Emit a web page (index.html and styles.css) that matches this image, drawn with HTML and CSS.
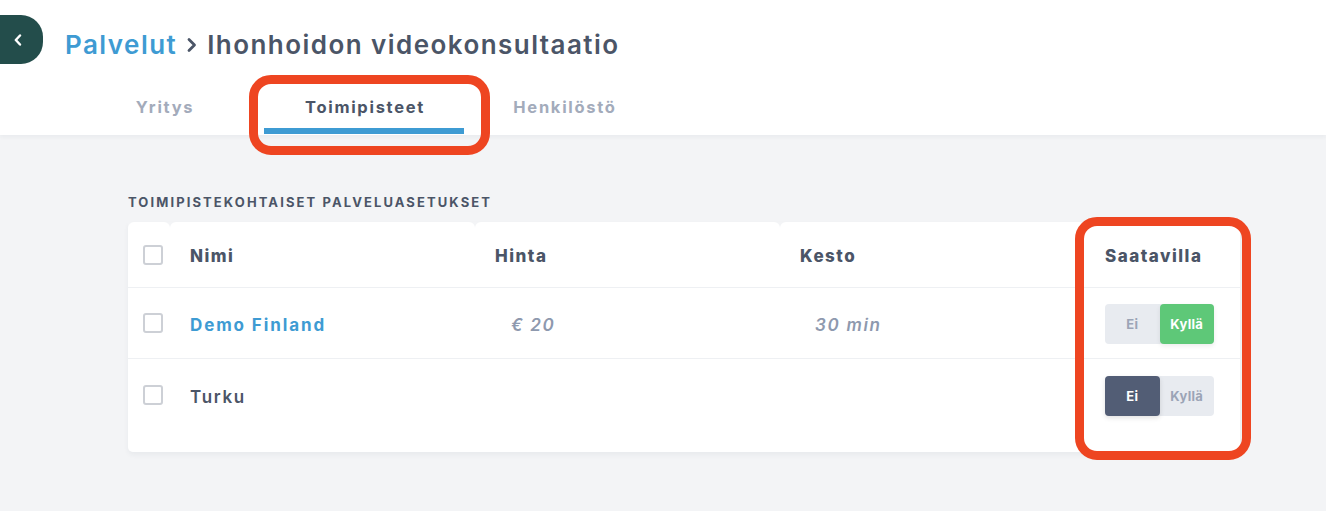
FILE: index.html
```html
<!DOCTYPE html>
<html lang="fi">
<head>
<meta charset="utf-8">
<title>Ihonhoidon videokonsultaatio</title>
<link rel="stylesheet" href="styles.css">
</head>
<body>
<header class="topbar">
  <div class="title-row">
    <button class="back" aria-label="Takaisin">
      <svg width="10" height="12" viewBox="0 0 10 12"><path d="M7 1.5 L2.8 6 L7 10.5" fill="none" stroke="#fff" stroke-width="2.4" stroke-linecap="round" stroke-linejoin="round"/></svg>
    </button>
    <h1 class="title">
      <a class="crumb" href="#">Palvelut</a>
      <svg class="sep" width="14" height="18" viewBox="0 0 14 18"><path d="M4 3.5 L9.5 9 L4 14.5" fill="none" stroke="#4b5567" stroke-width="2.8" stroke-linecap="round" stroke-linejoin="round"/></svg>
      <span>Ihonhoidon videokonsultaatio</span>
    </h1>
  </div>
  <nav class="tabs">
    <a class="tab" href="#">Yritys</a>
    <a class="tab active" href="#">Toimipisteet</a>
    <a class="tab" href="#">Henkilöstö</a>
  </nav>
</header>

<main class="content">
  <h2 class="section-label">Toimipistekohtaiset palveluasetukset</h2>
  <div class="card">
    <table class="grid">
      <colgroup>
        <col class="c-check"><col class="c-wide"><col class="c-wide"><col class="c-wide"><col class="c-avail">
      </colgroup>
      <thead>
        <tr>
          <th class="check"><span class="box"></span></th>
          <th>Nimi</th>
          <th>Hinta</th>
          <th>Kesto</th>
          <th>Saatavilla</th>
        </tr>
      </thead>
      <tbody>
        <tr>
          <td class="check"><span class="box"></span></td>
          <td class="name link">Demo Finland</td>
          <td class="val">€ 20</td>
          <td class="val">30 min</td>
          <td><div class="toggle"><span class="seg">Ei</span><span class="seg on-yes">Kyllä</span></div></td>
        </tr>
        <tr class="last">
          <td class="check"><span class="box"></span></td>
          <td class="name">Turku</td>
          <td class="val"></td>
          <td class="val"></td>
          <td><div class="toggle"><span class="seg on-no">Ei</span><span class="seg">Kyllä</span></div></td>
        </tr>
      </tbody>
    </table>
  </div>
</main>

<div class="mark mark-tab"></div>
<div class="mark mark-col"></div>
</body>
</html>
```

FILE: styles.css
```css
* { box-sizing: border-box; }
html, body { margin: 0; padding: 0; }
body {
  background: #f3f4f6;
  font-family: Inter, "Noto Sans", "Liberation Sans", sans-serif;
  color: #4f5a70;
  width: 1326px;
  height: 511px;
  overflow: hidden;
  position: relative;
}

.topbar {
  background: #fff;
  height: 135px;
  box-shadow: 0 2px 4px rgba(40, 50, 70, 0.05);
  position: relative;
}
.title-row {
  display: flex;
  align-items: center;
  padding-top: 15px;
  gap: 22px;
}
.back {
  width: 43px;
  height: 49px;
  border: none;
  background: #234d4b;
  border-radius: 0 22px 22px 0;
  display: flex;
  align-items: center;
  justify-content: flex-start;
  padding: 0 0 0 13px;
  margin: 0;
}
.title {
  margin: 10px 0 0;
  font-size: 26px;
  font-weight: 600;
  color: #4b5567;
  display: flex;
  align-items: center;
  gap: 8px;
  letter-spacing: 1.45px;
}
.crumb { color: #3e9bd3; text-decoration: none; }

.tabs {
  display: flex;
  margin-top: 16px;
  padding-left: 64px;
}
.tab {
  width: 200px;
  height: 54px;
  padding: 17px 0 0 2px;
  text-align: center;
  font-size: 16.5px;
  font-weight: 700;
  line-height: 20px;
  letter-spacing: 1.7px;
  color: #a3abbb;
  text-decoration: none;
  border-bottom: 6px solid transparent;
}
.tab.active {
  color: #4b5567;
  border-bottom-color: #3e9bd3;
}

.content {
  padding: 59px 0 0 128px;
}
.section-label {
  margin: 0 0 12px;
  font-size: 13px;
  line-height: 16px;
  font-weight: 700;
  text-transform: uppercase;
  color: #4b5567;
  letter-spacing: 2.1px;
}
.card {
  width: 1112px;
  background: linear-gradient(to bottom, transparent 6px, #fff 6px);
  border-radius: 0 0 5px 5px;
  box-shadow: 0 3px 5px rgba(40, 50, 70, 0.05);
  padding-bottom: 21px;
}
.grid {
  width: 100%;
  border-collapse: separate;
  border-spacing: 0;
  table-layout: fixed;
}
.c-check { width: 42px; }
.c-wide { width: 305px; }
.c-avail { width: 155px; }

.grid th {
  background: #fff;
  border-radius: 6px 6px 0 0;
  height: 66px;
  text-align: left;
  padding: 2px 0 0 20px;
  font-size: 17px;
  font-weight: 800;
  letter-spacing: 1.5px;
  color: #4b5567;
  border-bottom: 1px solid #eef0f3;
}
.grid td {
  height: 71px;
  padding: 3px 0 0 20px;
  border-bottom: 1px solid #eef0f3;
  font-size: 17px;
}
.grid tr.last td { border-bottom: none; height: 72px; }
.grid .check { padding: 0 0 0 15px; }
.box {
  display: block;
  width: 20px;
  height: 20px;
  border: 2px solid #cdd0d6;
  border-radius: 3px;
}
.name { font-weight: 600; color: #4b5567; letter-spacing: 1.7px; }
.name.link { color: #3e9bd3; font-weight: 700; letter-spacing: 1.9px; }
.grid td.val {
  padding-left: 36px;
  font-style: italic;
  font-weight: 600;
  letter-spacing: 1.7px;
  color: #8e99ae;
}
.grid tbody td:nth-child(4).val { padding-left: 35px; }
.grid tbody td:last-child { padding-top: 2px; }

.toggle {
  display: flex;
  width: 109px;
  height: 40px;
  background: #e8ebf0;
  border-radius: 4px;
}
.seg {
  flex: 1;
  display: flex;
  align-items: center;
  justify-content: center;
  font-size: 13px;
  font-weight: 700;
  letter-spacing: 0.3px;
  color: #9ba4b6;
  border-radius: 4px;
}
.seg.on-yes {
  background: #5ec878;
  color: #fff;
  box-shadow: 0 2px 5px rgba(0, 0, 0, 0.08);
}
.seg.on-no {
  background: #525d75;
  color: #fff;
  box-shadow: 0 2px 5px rgba(0, 0, 0, 0.12);
}

.mark {
  position: absolute;
  border: 9px solid #ee4521;
  border-radius: 22px;
  pointer-events: none;
}
.mark-tab { left: 249px; top: 75px; width: 241px; height: 80px; }
.mark-col { left: 1075px; top: 217px; width: 176px; height: 243px; }
```
